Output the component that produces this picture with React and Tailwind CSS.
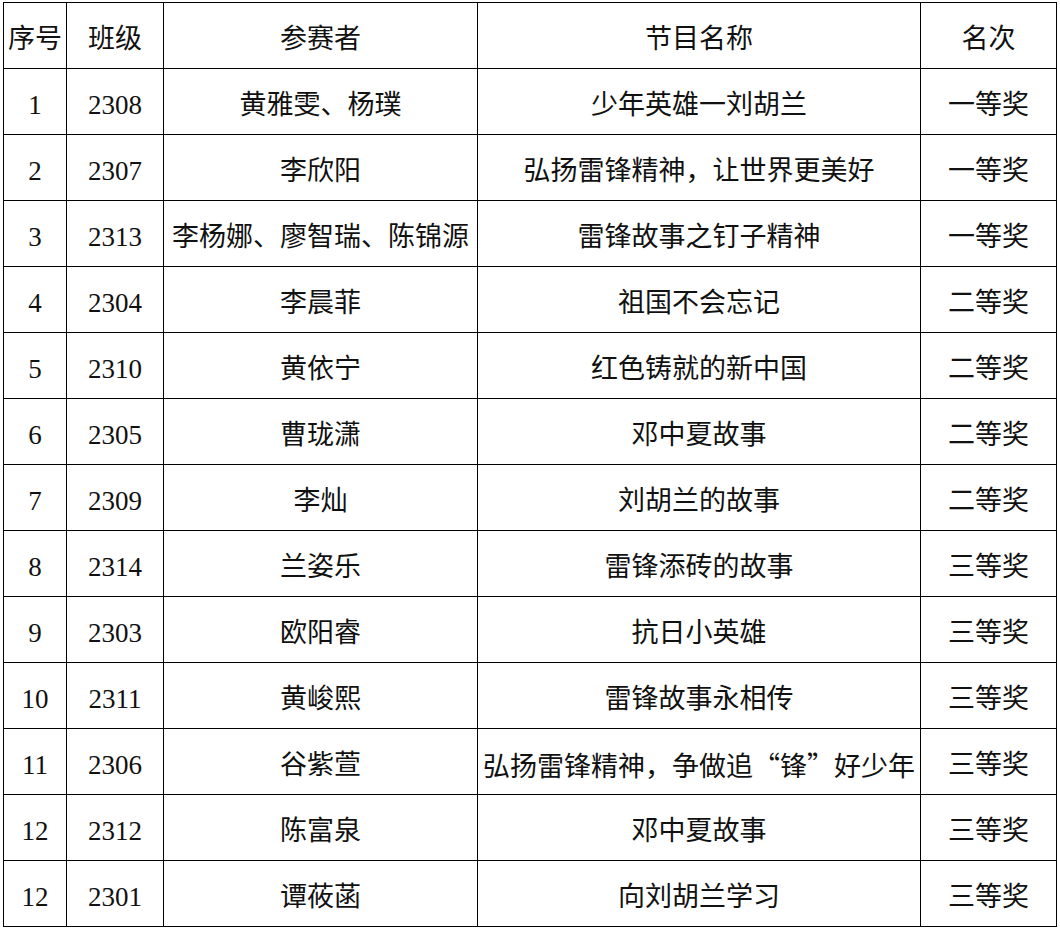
import React from "react";

const rows = [
  ["1", "2308", "黄雅雯、杨璞", "少年英雄一刘胡兰", "一等奖"],
  ["2", "2307", "李欣阳", "弘扬雷锋精神，让世界更美好", "一等奖"],
  ["3", "2313", "李杨娜、廖智瑞、陈锦源", "雷锋故事之钉子精神", "一等奖"],
  ["4", "2304", "李晨菲", "祖国不会忘记", "二等奖"],
  ["5", "2310", "黄依宁", "红色铸就的新中国", "二等奖"],
  ["6", "2305", "曹珑潇", "邓中夏故事", "二等奖"],
  ["7", "2309", "李灿", "刘胡兰的故事", "二等奖"],
  ["8", "2314", "兰姿乐", "雷锋添砖的故事", "三等奖"],
  ["9", "2303", "欧阳睿", "抗日小英雄", "三等奖"],
  ["10", "2311", "黄峻熙", "雷锋故事永相传", "三等奖"],
  ["11", "2306", "谷紫萱", "quote", "三等奖"],
  ["12", "2312", "陈富泉", "邓中夏故事", "三等奖"],
  ["12", "2301", "谭莜菡", "向刘胡兰学习", "三等奖"],
];

const headers = ["序号", "班级", "参赛者", "节目名称", "名次"];

// full-width quotes come from the CJK face, like in the source sheet
const cjk = { fontFamily: '"Noto Sans CJK SC", sans-serif' };

const renderCell = (c) => {
  if (c !== "quote") return c;
  return (
    <>
      弘扬雷锋精神，争做追<span style={cjk}>“</span>锋<span style={cjk}>”</span>好少年
    </>
  );
};

const App = () => {
  return (
    <div
      className="w-[1060px] h-[932px] bg-white pt-[2px] pl-[3px] text-[#111]"
      style={{ fontFamily: '"Liberation Serif", "Noto Sans CJK SC", serif' }}
    >
      <table className="table-fixed border-collapse w-[1053px] text-[27px] leading-none">
        <colgroup>
          <col className="w-[63px]" />
          <col className="w-[97px]" />
          <col className="w-[314px]" />
          <col className="w-[443px]" />
          <col className="w-[136px]" />
        </colgroup>
        <thead>
          <tr className="h-[66px]">
            {headers.map((h) => (
              <th key={h} className="border border-black font-normal text-center whitespace-nowrap p-0 pt-[8px]">
                {h}
              </th>
            ))}
          </tr>
        </thead>
        <tbody>
          {rows.map((r, i) => (
            <tr key={i} className="h-[66px]">
              {r.map((c, j) => (
                <td key={j} className="border border-black text-center whitespace-nowrap p-0 pt-[8px]">
                  {renderCell(c)}
                </td>
              ))}
            </tr>
          ))}
        </tbody>
      </table>
    </div>
  );
};

export default App;
